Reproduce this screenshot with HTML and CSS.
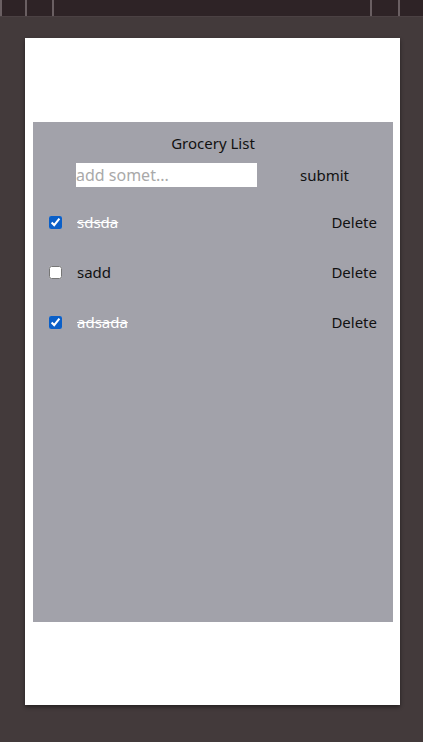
FILE: index.html
```html
<!DOCTYPE html>
<html lang="en">
<head>
<meta charset="utf-8">
<title>Grocery List</title>
<link rel="stylesheet" href="styles.css">
</head>
<body>
<div class="topbar">
  <span class="tab tab-a"></span>
  <span class="tab tab-b"></span>
  <span class="tab tab-c"></span>
  <span class="tab tab-d"></span>
  <span class="tab tab-e"></span>
</div>
<main class="device">
  <section class="panel">
    <h1 class="title">Grocery List</h1>
    <form class="add-form">
      <input class="add-input" type="text" placeholder="add somet...">
      <button class="submit" type="button">submit</button>
    </form>
    <ul class="list">
      <li class="item">
        <input class="check" type="checkbox" checked>
        <span class="label done">sdsda</span>
        <button class="delete" type="button">Delete</button>
      </li>
      <li class="item">
        <input class="check" type="checkbox">
        <span class="label">sadd</span>
        <button class="delete" type="button">Delete</button>
      </li>
      <li class="item">
        <input class="check" type="checkbox" checked>
        <span class="label done">adsada</span>
        <button class="delete" type="button">Delete</button>
      </li>
    </ul>
  </section>
</main>
</body>
</html>
```
FILE: styles.css
```css
html, body {
  margin: 0;
  padding: 0;
}
body {
  background: #433a3b;
  font-family: "Noto Sans", "Open Sans", sans-serif;
  height: 742px;
  overflow: hidden;
}
.topbar {
  height: 16px;
  background: #2e2326;
  border-bottom: 1px solid #4b4143;
  display: flex;
}
.tab {
  height: 16px;
  border-left: 2px solid #6a5f62;
  box-sizing: border-box;
}
.tab-a { width: 25px; }
.tab-b { width: 27px; }
.tab-c { width: 318px; }
.tab-d { width: 28px; }
.tab-e { flex: 1; }
.device {
  width: 375px;
  height: 667px;
  margin: 21px 0 0 25px;
  background: #ffffff;
  box-shadow: 0 2px 4px rgba(0, 0, 0, 0.45);
  padding-top: 84px;
  box-sizing: border-box;
}
.panel {
  width: 360px;
  height: 500px;
  margin-left: 8px;
  background: #a2a2aa;
  box-sizing: border-box;
  padding-top: 10px;
}
.title {
  margin: 0;
  font-size: 15px;
  font-weight: 400;
  color: #111;
  text-align: center;
  line-height: 22px;
}
.add-form {
  display: flex;
  align-items: center;
  margin-top: 9px;
  padding-left: 43px;
}
.add-input {
  width: 181px;
  height: 24px;
  border: none;
  padding: 0;
  margin: 0;
  background: #fff;
  font-family: inherit;
  font-size: 16px;
  color: #111;
  outline: none;
  box-sizing: border-box;
}
.add-input::placeholder {
  color: #a9a9a9;
}
.submit {
  margin-left: 43px;
  background: transparent;
  border: none;
  padding: 0;
  font-family: inherit;
  font-size: 15px;
  color: #111;
}
.list {
  list-style: none;
  margin: 10px 0 0;
  padding: 0 16px;
}
.item {
  display: flex;
  align-items: center;
  height: 50px;
}
.check {
  width: 13px;
  height: 13px;
  margin: 0;
  accent-color: #0a5fc8;
}
.label {
  margin-left: 15px;
  font-size: 15px;
  color: #111;
  flex: 1;
}
.label.done {
  color: #fff;
  text-decoration: line-through;
}
.delete {
  background: transparent;
  border: none;
  padding: 0;
  font-family: inherit;
  font-size: 15px;
  color: #111;
}
```
